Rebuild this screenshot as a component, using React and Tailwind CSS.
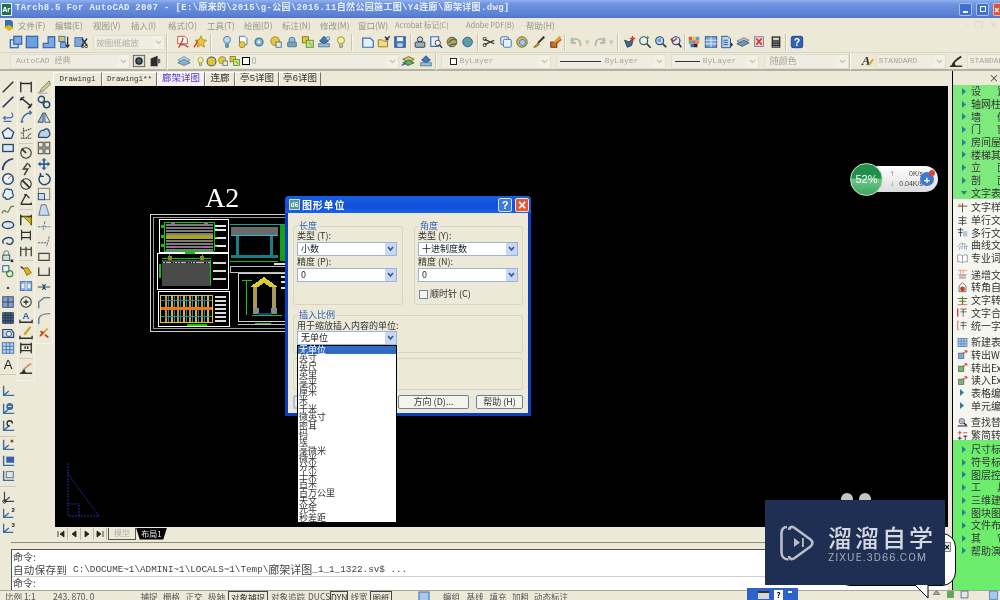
import React from "react";

const CJK = '"Noto Sans CJK SC", sans-serif';
const B = "#3a6db5", Y = "#e6c93a", K = "#2e2e2e", G = "#3d8f3d", R = "#cf3a2a", T = "#3f7f95";

const S = ({ children, s = 14 }) => (
  <svg width={s} height={s} viewBox="0 0 16 16" className="shrink-0" fill="none">{children}</svg>
);

const tb = {
  win: <><rect x="1.5" y="5.5" width="9" height="9" fill="#cfe0f5" stroke={B} strokeWidth="1.5"/><rect x="5.5" y="1.5" width="9" height="9" fill="#7fa9de" stroke={B} strokeWidth="1.5"/></>,
  full: <rect x="1.5" y="1.5" width="13" height="13" fill="#6d9fdc" stroke={B} strokeWidth="1.5"/>,
  stair: <path d="M1.5 14.5V9.5H7V2H14.5V14.5Z" fill="#7fa9de" stroke={B} strokeWidth="1.5"/>,
  arrowdoc: <><rect x="1" y="1.5" width="7" height="6" fill="#d8c36a" stroke={B}/><rect x="3" y="8.5" width="6" height="6" fill="#7fa9de" stroke={B}/><path d="M11 2V14M9 11l2 3 2-3" stroke={K} strokeWidth="1.4"/></>,
  wincut: <><rect x="1" y="3" width="9" height="10" fill="#7fa9de" stroke={B}/><path d="M9 4l6 8M15 4l-6 8" stroke={K} strokeWidth="1.5"/><circle cx="10" cy="13" r="1.5" stroke={K}/><circle cx="14" cy="13" r="1.5" stroke={K}/></>,
  pdf: <><path d="M2 1.5H10L13 4.5V10H2Z" fill="#fff" stroke={R}/><path d="M3 14.5C6 9 8 6 8 3 M4 12C8 10 11 11 14 14" stroke={R} strokeWidth="1.5"/></>,
  star: <><path d="M9 1L11 5.5L15.5 6L12 9L13 14L9 11.5L5 14L6 9L2.5 6L7 5.5Z" fill={Y} stroke="#b58a1c"/><path d="M1 14C4 11 5 9 5 6" stroke={R} strokeWidth="1.6"/></>,
  bulbb: <><circle cx="8" cy="5.5" r="4" fill="#bcd8f0" stroke={T}/><path d="M6.5 9.5V14H9.5V9.5" fill="#6d9bc0" stroke={T}/></>,
  docy: <><path d="M4 1.5H10L12.5 4V11H4Z" fill="#fff" stroke={B}/><circle cx="7" cy="11" r="3.5" fill={Y} stroke="#9a8420"/></>,
  gearb: <><circle cx="8" cy="8" r="4.5" fill="#8fb4d8" stroke={T} strokeWidth="1.5"/><circle cx="8" cy="8" r="1.6" fill="#fff"/></>,
  sunr: <><circle cx="7" cy="7" r="5" fill={Y} stroke="#9a8420"/><rect x="8" y="8" width="6" height="6" fill="#f3ebb8" stroke={B}/></>,
  prn: <><circle cx="8" cy="6" r="3.5" fill="#9fbad6" stroke={T}/><rect x="3" y="8" width="10" height="5.5" rx="1" fill="#7e9cc0" stroke={T}/></>,
  layy: <><rect x="1.5" y="2" width="7" height="7" fill={Y} stroke="#806f14"/><rect x="6" y="6" width="8" height="8" fill="#cfe27a" stroke={G}/><path d="M9 8l3 4" stroke={G}/></>,
  stamp: <><path d="M8 1.5L13 7L8 10L3 7Z" fill="#3f78bd" stroke="#234a80"/><rect x="2" y="10" width="12" height="3.5" fill="#aabccf" stroke={T}/><circle cx="12.5" cy="4" r="2" fill="#d0dff0" stroke={T}/></>,
  bulby: <><circle cx="8" cy="6" r="4" fill="#f7ee9a" stroke="#96882a"/><path d="M6.5 10V14H9.5V10" fill="#d8d3a8" stroke="#777"/></>,
  nw: <path d="M2 3.5H10.5L14 7V14H2Z" fill="#e7f1fb" stroke={B} strokeWidth="1.4"/>,
  open: <><path d="M1.5 5.5H6L7.5 7H12V13.5H1.5Z" fill="#f2dd7a" stroke="#8a7420"/><path d="M9 2L13 6M10 6L14.5 1.5" stroke={K} strokeWidth="1.6"/></>,
  save: <><rect x="2" y="2" width="12" height="12" fill="#3f78bd" stroke="#234a80"/><rect x="4.5" y="2.5" width="7" height="4.5" fill="#eaf1fa"/><rect x="5" y="9.5" width="6" height="4" fill="#bcd0e8"/></>,
  pr2: <><circle cx="8" cy="5" r="3" fill="#c4d4e6" stroke={K}/><rect x="2.5" y="8" width="11" height="6" rx="1" fill="#98afcb" stroke={K}/></>,
  prev: <><path d="M2 2H11V13H2Z" fill="#e9effa" stroke={B} strokeWidth="1.3"/><circle cx="10" cy="9" r="3" fill="#fff" stroke={K}/><path d="M12 11.5L15 14.5" stroke={K} strokeWidth="1.6"/></>,
  globey: <><circle cx="8" cy="8" r="5.5" fill="#c8a82e" stroke="#5f5210"/><path d="M4 9C7 5 11 4 13 6M5 13C7 10 10 10 13 10" stroke="#2e6cb5" strokeWidth="1.8"/></>,
  globeb: <><circle cx="7.5" cy="8" r="5.5" fill="#5f94cf" stroke="#2b5b90"/><path d="M4 6C6 4 9 5 10 7S7 10 6 12" stroke="#5faa5f" strokeWidth="2"/></>,
  cut: <><path d="M3 5L14 10M3 11L14 6" stroke={K} strokeWidth="1.4"/><circle cx="3" cy="4.5" r="1.8" stroke={K}/><circle cx="3" cy="11.5" r="1.8" stroke={K}/></>,
  copy: <><rect x="2" y="2" width="9" height="9" rx="1.5" fill="#dde9f7" stroke={B}/><rect x="5" y="5" width="9" height="9" rx="1.5" fill="#e7f1fb" stroke={B}/></>,
  paste: <><circle cx="8" cy="8" r="6" fill="#d7c05c" stroke="#6f6420"/><circle cx="8.5" cy="8.5" r="3.5" fill="#a9c9ea" stroke={B}/></>,
  brush: <><path d="M14 2L7 9" stroke={K} strokeWidth="2.2"/><path d="M7 9L2 14L5 13.5L8.5 10.5Z" fill="#d9a01e" stroke="#7b5a10"/></>,
  match: <><rect x="2" y="8" width="7" height="6" fill="#c76f33" stroke="#5a3311"/><path d="M13 2L6 9" stroke="#d9a01e" strokeWidth="3"/><path d="M14 5L8 10" stroke={R} strokeWidth="1.5"/></>,
  undo: <path d="M13 13C14 7 10 3 5 5L3 9M3 3V9H8" stroke="#b8b5a6" strokeWidth="2"/>,
  redo: <path d="M3 13C2 7 6 3 11 5L13 9M13 3V9H8" stroke="#b8b5a6" strokeWidth="2"/>,
  pan: <><path d="M3 6L8 8L13 4L11 12L6 14Z" fill="#45688f" stroke="#1f3a5a"/><path d="M9 4H15M12 1V7" stroke={R} strokeWidth="1.6"/></>,
  zr: <><circle cx="6.5" cy="6.5" r="4.5" fill="#e7f1fb" stroke="#3d5e48" strokeWidth="1.4"/><path d="M10 10L14.5 14.5" stroke={K} strokeWidth="1.8"/><path d="M11 1V5M9 3h4" stroke={G}/></>,
  zw: <><circle cx="6.5" cy="6.5" r="4.5" fill="#c7dcf2" stroke="#2d4d78" strokeWidth="1.4"/><rect x="4" y="4" width="4" height="4" fill="#6d9fdc"/><path d="M10 10L14 14" stroke={K} strokeWidth="2"/></>,
  zp: <><circle cx="8" cy="6.5" r="4.5" fill="#dde9f7" stroke="#2d4d78" strokeWidth="1.4"/><path d="M5 7l4-3M2 4l3 4" stroke="#b5341f" strokeWidth="1.5"/><path d="M11 10L14 14" stroke={K} strokeWidth="2"/></>,
  pal: <>{[[2,2,"#e8524a"],[6,2,"#f2c530"],[10,2,"#4aa3df"],[2,6,"#58b858"],[6,6,"#d455c8"],[10,6,"#f28e2b"],[4,10,"#3a6db5"],[8,10,"#2e2e2e"]].map(([x,y,c],i)=><rect key={i} x={x} y={y} width="4" height="4" fill={c}/>)}</>,
  grid: <><rect x="1.5" y="2" width="13" height="12" fill="#7fa9de" stroke="#234a80"/><path d="M8 2V14M1.5 6H14.5M1.5 10H14.5" stroke="#e7f1fb"/></>,
  docs: <><path d="M2 1.5H9L12 4.5V14.5H2Z" fill="#bcd4ee" stroke="#234a80"/><path d="M4 6H9M4 8.5H9M4 11H9" stroke="#234a80"/><path d="M12 8L15 11L12 14" fill={K}/></>,
  stack: <><path d="M1 7L9 3L15 6L7 10Z" fill="#b9c6d3" stroke="#6a7c8c"/><path d="M1 10L9 6L15 9L7 13Z" fill="#7895ae" stroke="#4c6073"/></>,
  redt: <><rect x="3" y="2" width="10" height="11" fill="#f3d5d0" stroke="#7b6fa5"/><path d="M5 4L11 11M11 4L5 11" stroke={R} strokeWidth="2"/></>,
  calc: <><rect x="3" y="1.5" width="10" height="13" fill={K}/><rect x="4.5" y="3" width="7" height="3" fill="#c7d4c0"/><path d="M5 8H11M5 10.5H11M5 13H11" stroke="#ddd" strokeDasharray="1.4 1"/></>,
  help: <><rect x="1.5" y="1.5" width="13" height="13" rx="2" fill="#2f62b5" stroke="#1e3f80"/><text x="8" y="12.5" textAnchor="middle" fontSize="12" fontWeight="700" fontFamily="Liberation Sans, sans-serif" fill="#fff">?</text></>,
  gear2: <><rect x="1.5" y="1.5" width="13" height="13" fill="#dbdbd0" stroke="#555"/><circle cx="8" cy="8" r="3.5" fill="#3f5f70" stroke="#222" strokeWidth="1.5"/></>,
  cam: <><path d="M3 5L11 2V14H3Z" fill={K}/><path d="M11 5L14 6V10L11 11Z" fill="#666"/></>,
  laystack: <><path d="M1 7L8 3L15 7L8 10Z" fill="#c4d8ea" stroke="#6a8fac"/><path d="M1 10L8 6L15 10L8 13Z" fill="#8fb0cc" stroke="#577a96"/></>,
  sm1: <><path d="M2 6L9 3L15 6L8 9Z" fill="#d7c85a" stroke="#6a6020"/><path d="M2 10L9 7L15 10L8 13Z" fill="#5fb06a" stroke="#2f6a3a"/><path d="M1 13L6 10" stroke="#2f62b5" strokeWidth="1.6"/></>,
  sm2: <><path d="M8 2L13 7L8 10L3 7Z" fill="#3f78bd" stroke="#234a80"/><rect x="2" y="10" width="12" height="3.5" fill="#aabccf" stroke={T}/></>,
  txtA: <><text x="7" y="13" textAnchor="middle" fontSize="15" fontWeight="700" fontStyle="italic" fontFamily="Liberation Serif, serif" fill={K}>A</text><path d="M10 13L15 6" stroke="#d9a01e" strokeWidth="2"/></>,
  dimst: <><path d="M1 14H15" stroke={K} strokeWidth="1.6"/><path d="M4 13C5 9 9 6 14 3" stroke={K} strokeWidth="2"/><path d="M2 14L6 9L8 14Z" fill={K}/></>,
};

const lft = {
  line: <path d="M2 14L14 2" stroke={K} strokeWidth="1.6"/>,
  xline: <path d="M2 14L14 2" stroke="#233d66" strokeWidth="2"/>,
  pline: <path d="M12 3C15 6 13 9 10 9H3M5 7L3 9L5 11M3 13H12" stroke={B} strokeWidth="1.5"/>,
  poly: <path d="M8 2L14.5 7L12 14H4L1.5 7Z" fill="#e7f1fb" stroke="#27496f" strokeWidth="1.5"/>,
  rect: <rect x="2" y="4" width="12" height="8" fill="#dbe7f5" stroke="#27496f" strokeWidth="1.5"/>,
  arc: <path d="M2 15C2 8 7 3 14 2" stroke="#27496f" strokeWidth="2"/>,
  circ: <><circle cx="8" cy="8" r="6" fill="#e7f1fb" stroke="#27496f" strokeWidth="1.7"/><path d="M8 8L12 4" stroke={R}/></>,
  cloud: <path d="M4 6C3 3 7 1 9 3C11 2 14 4 13 7C15 9 14 13 11 12C10 15 5 15 5 12C2 13 1 8 4 6Z" fill="#e7f1fb" stroke="#27496f" strokeWidth="1.4"/>,
  spline: <path d="M1 12C4 4 7 14 9 9S12 3 15 4" stroke="#5a7a5a" strokeWidth="1.4"/>,
  ell: <ellipse cx="8" cy="8" rx="6.5" ry="4" fill="#dbe7f5" stroke="#27496f" strokeWidth="1.6"/>,
  ella: <path d="M3 11C0 7 5 4 9 4S15 7 13 10S8 12 6 10" stroke="#27496f" strokeWidth="1.6"/>,
  ins: <><circle cx="6" cy="5" r="3" stroke="#3d7a55"/><rect x="2" y="7" width="8" height="6" fill="#cfe0cf" stroke="#27496f"/><rect x="11" y="12" width="3" height="3" fill={K}/></>,
  blk: <><rect x="2" y="2" width="7" height="7" fill="#e7f1fb" stroke="#27496f"/><circle cx="10" cy="11" r="3.5" stroke={G} strokeWidth="1.4"/></>,
  pt: <circle cx="8" cy="9" r="1.4" fill="#27496f"/>,
  hatch: <><rect x="2" y="2" width="12" height="12" fill="#8aa0c4" stroke="#27496f"/><path d="M2 8H14M8 2V14" stroke="#27365a"/></>,
  grad: <><rect x="2" y="2" width="12" height="12" fill="#4f6a8f" stroke="#1a2a44"/><path d="M2 8H14M8 2V14M2 5H14M2 11H14M5 2V14M11 2V14" stroke="#1a2a44" strokeWidth=".8"/></>,
  region: <><path d="M2 4H12L14.5 8V13H2Z" fill="#bcd8f0" stroke="#27496f" strokeWidth="1.3"/><circle cx="9" cy="9" r="3" fill="#e7f1fb" stroke="#27496f"/></>,
  table: <><rect x="1.5" y="2" width="13" height="12" fill="#bcd4ee" stroke="#3b6bab"/><path d="M1.5 6H14.5M1.5 10H14.5M6 2V14M10 2V14" stroke="#3b6bab"/></>,
  A: <text x="8" y="14" textAnchor="middle" fontSize="15" fontFamily="Liberation Sans, sans-serif" fill="#222">A</text>,
  dl: <><path d="M2 2V14M14 2V14M2 4H14" stroke={K} strokeWidth="1.5"/></>,
  da: <path d="M2 3L14 13M2 3l1 3M1 6l5-4M14 13l-4 2M15 10l-4 4" stroke={K} strokeWidth="1.5"/>,
  dc: <path d="M3 14C3 8 8 3 14 3M2 14l3-1M12 1l2 2-2 2" stroke="#3a6da0" strokeWidth="1.7"/>,
  dord: <path d="M2 14H14M5 2V14M5 6L14 3M8 14L14 8M2 8H5" stroke="#444" strokeWidth="1.2" strokeDasharray="2 .7"/>,
  drad: <><circle cx="8" cy="8" r="6" stroke={K} strokeWidth="1.2"/><path d="M3 3L8 8" stroke={K} strokeWidth="2"/></>,
  djog: <path d="M10 1L5 8H10L6 15M11 2L13 6" stroke="#444" strokeWidth="1.8"/>,
  ddia: <><circle cx="8" cy="8" r="6" stroke={K} strokeWidth="1.2"/><path d="M3.5 3.5L12.5 12.5" stroke={K} strokeWidth="2"/></>,
  dang: <path d="M2 14H14V12M2 14L8 3L12 7M8 3L6 3" stroke={K} strokeWidth="1.5"/>,
  dq: <><path d="M2 2V14M14 2V14M2 4H14" stroke={K} strokeWidth="1.6"/><path d="M5 4L14 13V5Z" fill="#d9b61a" stroke="#7d6a10"/></>,
  dbase: <path d="M3 2V14M13 3V14M3 5H13M3 11H13" stroke={K} strokeWidth="1.3"/>,
  dcont: <path d="M2 3V14M8 3V14M14 3V14M2 6H14" stroke={K} strokeWidth="1.3"/>,
  dlead: <><path d="M2 3L6 6" stroke={K} strokeWidth="1.5"/><path d="M5 5L10 4L14 10L9 13Z" fill="#d9b61a" stroke="#7d6a10"/></>,
  dtol: <><rect x="1.5" y="3" width="13" height="10" fill="#8ab0de" stroke="#3b6bab"/><path d="M8 3V13" stroke="#eee"/><rect x="3" y="5.5" width="3" height="5" fill="#eee"/><rect x="10" y="5.5" width="3" height="5" fill="#eee"/></>,
  dcen: <><circle cx="8" cy="8" r="6" fill="#f3f1e6" stroke={K} strokeWidth="1.2"/><path d="M8 5V11M5 8H11" stroke={K} strokeWidth="1.5"/></>,
  dA: <><text x="8" y="10" textAnchor="middle" fontSize="11" fontWeight="700" fontFamily="Liberation Sans, sans-serif" fill="#2f62b5">A</text><path d="M1 14H15M1 11V15M15 11V15" stroke={K} strokeWidth="1.5"/></>,
  dpen: <><path d="M13 1L6 10" stroke="#c9a620" strokeWidth="2.6"/><path d="M1 14H15M1 11V15M15 11V15" stroke={K} strokeWidth="1.5"/></>,
  dupd: <path d="M2 2V14M14 2V14M2 4H14M2 11H14M7 6V9M10 6V9" stroke={K} strokeWidth="1.5"/>,
  dst: <><path d="M1 14H15" stroke={K} strokeWidth="1.6"/><path d="M4 13C5 9 9 6 14 3" stroke="#c99b66" strokeWidth="2.2"/><path d="M2 14L6 9L8 14Z" fill={K}/></>,
  er: <><path d="M14 1L5 10L3 14L8 12L15 5Z" fill="#d7cf8d" stroke="#79735a"/><path d="M1 15H12" stroke="#999"/></>,
  cp: <><circle cx="5" cy="5" r="3.5" stroke="#27496f" strokeWidth="1.6"/><circle cx="11" cy="11" r="3.5" stroke="#27496f" strokeWidth="1.6"/><path d="M5 9L9 13" stroke="#27496f"/></>,
  mi: <><path d="M7 3V14H1Z" fill="#9eb8d6" stroke="#27496f"/><path d="M9 3V14H15Z" fill="#dfe7f2" stroke="#27496f"/></>,
  off: <path d="M2 13C1 8 5 4 8 5C9 2 14 3 14 7C16 10 13 14 9 13Z" fill="#b8d0e8" stroke="#27496f" strokeWidth="1.4"/>,
  arr: <>{[[1.5,1.5],[9,1.5],[1.5,9],[9,9]].map(([x,y],i)=><rect key={i} x={x} y={y} width="5.5" height="5.5" stroke="#555" strokeWidth="1.3"/>)}</>,
  mv: <path d="M8 1L11 4H9V7H12V5L15 8L12 11V9H9V12H11L8 15L5 12H7V9H4V11L1 8L4 5V7H7V4H5Z" fill="#2f5e9b"/>,
  rot: <path d="M10 2A6.3 6.3 0 1 1 5 3M4 1V5H8" stroke="#27496f" strokeWidth="1.7"/>,
  sc: <><rect x="1.5" y="1.5" width="13" height="13" stroke="#777"/><rect x="1.5" y="7.5" width="7" height="7" fill="#c8d9ec" stroke="#27496f"/></>,
  st: <><path d="M5 2H10L14 14H2Z" fill="#c8d9ec" stroke="#4a6a8a"/><path d="M10 2L14 14" stroke="#999"/></>,
  tr: <path d="M1 10H15M9 4L7 14" stroke="#5f7f9f" strokeWidth="1.2" strokeDasharray="3 1"/>,
  ex: <path d="M1 10H8M8 10H11M14 3L11 14" stroke="#4a6a8a" strokeWidth="1.2" strokeDasharray="2.5 1"/>,
  brk: <path d="M2 5H14V13H2Z" fill="#ece9d8" stroke="#444" strokeWidth="1.3"/>,
  join: <path d="M2 4V13H14V4" stroke="#444" strokeWidth="1.5"/>,
  bar: <path d="M1 8H15M6 5L9 8L6 11M10 5L7 8L10 11" stroke="#27496f" strokeWidth="1.4"/>,
  cham: <path d="M2 15V8L8 3H15" stroke="#5f7f9f" strokeWidth="1.6"/>,
  fil: <path d="M2 15V10C2 6 6 3 15 3" stroke="#5f7f9f" strokeWidth="1.6"/>,
  expl: <><path d="M3 12L12 3" stroke="#d9a01e" strokeWidth="2"/><path d="M4 6L7 8L4 11M9 10L13 13" stroke={R} strokeWidth="2"/></>,
  u1: <path d="M3 2V13H15M3 13L9 8" stroke="#3a6da0" strokeWidth="1.6"/>,
  u2: <><path d="M3 2V13H15M3 13L9 8" stroke="#3a6da0" strokeWidth="1.6"/><circle cx="10" cy="5" r="4" fill="#3a6da0"/><path d="M8 5H12" stroke="#fff"/></>,
  u3: <><path d="M3 2V13H15M3 13L9 8" stroke="#3a6da0" strokeWidth="1.6"/><path d="M13 5A3 3 0 1 0 10 8" stroke={K} strokeWidth="1.5"/></>,
  u4: <><path d="M3 2V13H15M3 13L9 8" stroke="#3a6da0" strokeWidth="1.6"/><rect x="11" y="2" width="3" height="3" fill="#6b5a12"/></>,
  u5: <><path d="M3 2V13H15" stroke="#3a6da0" strokeWidth="1.6"/><rect x="6" y="3" width="9" height="7" fill="#2f62b5"/></>,
  u6: <><path d="M3 2V13H15" stroke="#3a6da0" strokeWidth="1.6"/><rect x="6" y="3" width="8" height="7" fill="#e9e6d6" stroke="#3a6da0"/></>,
  u7: <><path d="M4 2V13H15M4 13L10 8" stroke="#445" strokeWidth="1.4"/><circle cx="4" cy="13" r="2" stroke="#222"/></>,
  u8: <><path d="M3 3V13H14M3 13L9 8" stroke="#3a6da0" strokeWidth="1.5"/><text x="12" y="7" fontSize="7" fontWeight="700" fill="#222" fontFamily="Liberation Sans, sans-serif">2</text></>,
  u9: <><path d="M3 3V13H14M3 13L9 8" stroke="#3a6da0" strokeWidth="1.5"/><text x="12" y="7" fontSize="7" fontWeight="700" fill="#222" fontFamily="Liberation Sans, sans-serif">3</text></>,
};

const rgt = {
  a: <><path d="M1 6H15M8 2V15" stroke="#7b4a2a" strokeWidth="1.4"/><path d="M2 3L6 5" stroke={R}/></>,
  z: <path d="M8 1V3M2 4H14M3 8H13M2 12H14M8 4V15" stroke="#333" strokeWidth="1.2"/>,
  m: <><path d="M1 4H9M2 8H8M5 1V14" stroke="#333" strokeWidth="1.2"/><rect x="9" y="6" width="6" height="8" fill="#a9c6e6"/></>,
  c: <path d="M1 10C5 3 11 3 15 10M3 14L5 9M7 13L8 6M11 13L11 7M14 14L13 9" stroke="#3a5ea0" strokeDasharray="2 .8"/>,
  b: <><path d="M1 3C4 2 6 3 8 4C10 3 12 2 15 3V13C12 12 10 13 8 14C6 13 4 12 1 13Z" fill="#fff" stroke="#777"/><path d="M8 4V14" stroke="#777"/></>,
  d: <><path d="M2 2H14M5 2V8M9 2V8M2 8H14" stroke={R} strokeDasharray="1 .6"/><path d="M3 10H13M3 13H13" stroke="#555"/></>,
  rot: <><path d="M8 1L13 6V14H3V6Z" fill="#fff" stroke="#333"/><circle cx="8" cy="10" r="3.5" fill={R}/></>,
  t: <><path d="M1 5H15M8 2V14M3 9H13" stroke="#5a7a2a" strokeWidth="1.6"/><path d="M1 14H15" stroke={R}/></>,
  h: <><path d="M1 2V14" stroke="#d04060" strokeWidth="2"/><path d="M5 3H14M5 7H14M9 3V14" stroke="#333"/></>,
  u: <><path d="M1 2V14M3 2H1M3 14H1" stroke={R}/><path d="M5 4H14M5 8H14M9 2V14" stroke="#333"/></>,
  tb: <><rect x="1.5" y="2" width="13" height="12" fill="#bcd4ee" stroke="#3b6bab"/><path d="M1.5 6H14.5M1.5 10H14.5M6 2V14M10 2V14" stroke="#3b6bab"/></>,
  w: <><rect x="2" y="6" width="8" height="8" fill="#8aa6d0" stroke="#3b6bab"/><path d="M7 7L14 3M11 2L15 3L13 6" stroke={R} strokeWidth="1.3"/></>,
  e: <><rect x="2" y="6" width="8" height="8" fill="#7fb27a" stroke="#3f7a3b"/><path d="M7 7L14 3M11 2L15 3L13 6" stroke={R} strokeWidth="1.3"/></>,
  fi: <><circle cx="7" cy="6" r="4" fill="#b8c0c8" stroke="#556"/><path d="M1 13H15" stroke="#555" strokeWidth="2"/><path d="M10 9L14 12" stroke="#222" strokeWidth="2"/></>,
  j: <><path d="M1 4H7M4 1V7M9 4H15" stroke={R} strokeWidth="1.2"/><path d="M1 12H7M9 9H15M12 8V15M4 9V15" stroke="#224" strokeWidth="1.2"/></>,
};

const C = ({ name, set = tb, w = "w-[16.25px]" }) => (
  <div className={`${w} h-full flex items-center justify-center shrink-0`}><S>{set[name]}</S></div>
);
const Sep = () => <div className="w-[1px] h-[17px] self-center bg-[#c9c5b2] border-r border-[#f8f7ef] box-content shrink-0" />;
const Chev = () => (
  <div className="w-[11px] h-full ml-auto flex items-center justify-center bg-[#f3f1e6] shrink-0">
    <svg width="7" height="5" viewBox="0 0 7 5" fill="none"><path d="M1 1L3.5 3.5L6 1" stroke="#c0c0b5" strokeWidth="1.2"/></svg>
  </div>
);
const Combo = ({ className, children }) => (
  <div className={`h-[15px] flex items-center self-center bg-[#efede1] border border-[#e1dece] shrink-0 overflow-hidden text-[#a8a598] ${className}`}>
    {children}<Chev />
  </div>
);
const mono = { fontFamily: `"Liberation Mono", ${CJK}` };

const menus = [
  ["文件(F)", "w-[37px]"], ["编辑(E)", "w-[38px]"], ["视图(V)", "w-[38px]"], ["插入(I)", "w-[37px]"], ["格式(O)", "w-[39px]"], ["工具(T)", "w-[37px]"],
  ["绘图(D)", "w-[38px]"], ["标注(N)", "w-[38px]"], ["修改(M)", "w-[38px]"], ["窗口(W)", "w-[37px]"], ["Acrobat 标记(C)", "w-[71px]"], ["Adobe PDF(B)", "w-[60px]"], ["帮助(H)", "w-[40px]"],
];

const TitleBar = () => (
  <div className="h-[18px] flex items-center bg-[linear-gradient(#8fb0ee_0%,#6c92e0_25%,#5c82d6_80%,#4f74c8_100%)] shrink-0">
    <div className="ml-[1px] w-[11px] h-[13px] bg-[#2d6b52] border border-[#cfe] flex items-center justify-center text-[7px] leading-none text-white font-bold">Ar</div>
    <div className="ml-[3px] text-[9px] font-bold text-[#e8eefc] whitespace-nowrap tracking-[0.33px]" style={mono}>TArch8.5 For AutoCAD 2007 - [E:\原来的\2015\g-公园\2015.11自然公园施工图\Y4连廊\廊架详图.dwg]</div>
    <div className="ml-auto flex items-center gap-[4px]">
      <div className="w-[13px] h-[13px] rounded-[2px] bg-[#3f6fd0] border border-[#a8c0ee] flex items-end justify-center pb-[2px]"><div className="w-[5px] h-[2px] bg-white" /></div>
      <div className="w-[13px] h-[13px] rounded-[2px] bg-[#3f6fd0] border border-[#a8c0ee] flex items-center justify-center"><div className="w-[6px] h-[6px] border border-white" /></div>
      <div className="w-[7px] h-[13px] rounded-l-[2px] bg-[#d8553a] border-l border-y border-[#eeb0a0] text-white text-[10px] leading-[12px] font-bold overflow-hidden">×</div>
    </div>
  </div>
);

const MenuBar = () => (
  <div className="h-[14px] flex items-center shrink-0 text-[8.5px] text-[#96948a] relative" style={{ fontFamily: CJK }}>
    <div className="w-[18px] h-full flex items-center justify-center">
      <svg width="12" height="13" viewBox="0 0 12 13"><path d="M2 1H8L10 3V9H2Z" fill="#3a6db5"/><path d="M1 8L6 12L11 9L6 6Z" fill="#d9b61a"/></svg>
    </div>
    {menus.map(([m, w]) => <div key={m} className={`${w} whitespace-nowrap shrink-0 ${m[0] === "A" ? "text-[7.5px]" : ""}`}>{m}</div>)}
    <div className="ml-auto flex items-center gap-[6px] pr-[2px] text-[#d4d1c2] text-[9px]"><span>-</span><span>❐</span><span>×</span></div>
  </div>
);

const Row1 = () => (
  <div className="h-[21px] flex shrink-0 border-b border-[#d9d6c5]">
    <div className="w-[8px] shrink-0" />
    {["win", "full", "stair", "arrowdoc", "wincut"].map(n => <C key={n} name={n} />)}
    <div className="w-[4px] shrink-0" />
    <Combo className="w-[72px] text-[8.5px] pl-[2px]"><span className="text-[#b0ad9f] whitespace-nowrap" style={{ fontFamily: CJK }}>按图纸缩放</span></Combo>
    <div className="w-[1px] shrink-0" /><Sep /><div className="w-[7px] shrink-0" />
    {["pdf", "star"].map(n => <C key={n} name={n} />)}
    <div className="w-[2px] shrink-0" /><Sep /><div className="w-[7px] shrink-0" />
    {["bulbb", "docy", "gearb", "sunr", "prn", "layy", "stamp", "bulby"].map(n => <C key={n} name={n} />)}
    <div className="w-[2px] shrink-0" /><Sep /><div className="w-[7px] shrink-0" />
    {["nw", "open", "save"].map(n => <C key={n} name={n} />)}
    <div className="w-[1px] shrink-0" /><Sep />
    {["pr2", "prev", "globey", "globeb"].map(n => <C key={n} name={n} />)}
    <Sep /><div className="w-[2px] shrink-0" />
    {["cut", "copy", "paste", "brush", "match"].map(n => <C key={n} name={n} w="w-[16.75px]" />)}
    <Sep /><div className="w-[3px] shrink-0" />
    <C name="undo" w="w-[13px]" /><div className="w-[11px] text-center text-[9px] leading-[20px] text-[#c5c2b3]">▾</div>
    <C name="redo" w="w-[13px]" /><div className="w-[11px] text-center text-[9px] leading-[20px] text-[#c5c2b3]">▾</div>
    <Sep /><div className="w-[2px] shrink-0" />
    {["pan", "zr", "zw", "zp"].map(n => <C key={n} name={n} w="w-[15.75px]" />)}
    <Sep />
    {["pal", "grid", "docs", "stack", "redt", "calc"].map(n => <C key={n} name={n} />)}
    <div className="w-[1px] shrink-0" /><Sep /><div className="w-[2px] shrink-0" />
    <C name="help" />
  </div>
);

const Row2 = () => (
  <div className="h-[18px] flex shrink-0 border-b-2 border-[#b5b1a0] text-[8px]">
    <div className="w-[10px] shrink-0" />
    <Combo className="w-[120px] pl-[5px]"><span className="whitespace-nowrap" style={mono}>AutoCAD 经典</span></Combo>
    <div className="w-[1px] shrink-0" />
    <C name="gear2" /><C name="cam" />
    <div className="w-[2px] shrink-0" /><Sep /><div className="w-[8px] shrink-0" />
    <C name="laystack" />
    <Combo className="w-[206px] ml-[1px]">
      <div className="flex items-center gap-0 pl-[1px]">
        <S s={11}>{tb.bulby}</S><S s={11}><circle cx="8" cy="8" r="6.5" fill="#dcc63a" stroke="#555" strokeWidth="1.5"/></S><S s={12}>{tb.sunr}</S><S s={12}>{tb.layy}</S>
        <div className="w-[8px] h-[8px] bg-white border border-black mx-[1px]" /><span className="ml-[1px]">0</span>
      </div>
    </Combo>
    <C name="sm1" w="w-[18px]" /><C name="sm2" w="w-[18px]" />
    <Sep /><div className="w-[4px] shrink-0" />
    <Combo className="w-[110px] pl-[8px]" ><div className="w-[7px] h-[7px] bg-white border border-[#222] mr-[3px]" /><span className="whitespace-nowrap" style={mono}>ByLayer</span></Combo>
    <div className="w-[5px] shrink-0" />
    <Combo className="w-[110px] pl-[3px]"><div className="w-[41px] h-[1px] bg-[#333] mr-[4px]" /><span className="whitespace-nowrap" style={mono}>ByLayer</span></Combo>
    <div className="w-[5px] shrink-0" />
    <Combo className="w-[88px] pl-[3px]"><div className="w-[25px] h-[1px] bg-[#333] mr-[3px]" /><span className="whitespace-nowrap" style={mono}>ByLayer</span></Combo>
    <div className="w-[5px] shrink-0" />
    <Combo className="w-[85px] pl-[5px]"><span className="text-[9px] whitespace-nowrap" style={{ fontFamily: CJK }}>随颜色</span></Combo>
    <Sep /><div className="w-[7px] shrink-0" />
    <C name="txtA" w="w-[18px]" />
    <Combo className="w-[70px] pl-[2px]"><span className="whitespace-nowrap" style={mono}>STANDARD</span></Combo>
    <C name="dimst" w="w-[21px]" />
    <Combo className="w-[36px] pl-[2px]"><span className="whitespace-nowrap" style={mono}>STANDARD</span></Combo>
  </div>
);

const IconColumn = ({ items, className }) => (
  <div className={`flex flex-col shrink-0 ${className}`}>
    {items.map((n, i) => n === "-"
      ? <div key={i} className="h-[1px] my-[2px] mx-[1px] bg-[#cfcbb9]" />
      : <div key={i} className="h-[15.4px] flex items-center justify-center"><S s={14}>{lft[n]}</S></div>)}
  </div>
);

const LeftBars = () => (
  <div className="w-[55px] shrink-0 flex pt-[8px]">
    <div className="w-[16px] shrink-0">
      <IconColumn className="w-[15px]" items={["line","xline","pline","poly","rect","arc","circ","cloud","spline","ell","ella","ins","blk","pt","hatch","grad","region","table","A"]} />
      <div className="h-[4px] border-b border-[#cfcbb9]" />
      <div className="h-[8px]" />
      <IconColumn className="w-[15px] gap-[2px]" items={["u1","u2","u3"]} />
      <div className="h-[2px]" /><div className="h-[1px] bg-[#cfcbb9]" /><div className="h-[1px]" />
      <IconColumn className="w-[15px]" items={["u4","u5","u6"]} />
      <div className="h-[2px]" /><div className="h-[1px] bg-[#cfcbb9]" /><div className="h-[3px]" />
      <IconColumn className="w-[15px]" items={["u7","u8","u9"]} />
    </div>
    <div className="w-[18px] ml-[1px] h-[302px] border-x border-b border-[#f6f4ea] shrink-0">
      <IconColumn items={["dl","da","dc","dord","-","drad","djog","ddia","dang","-","dq","dbase","dcont","-","dlead","dtol","dcen","dA","dpen","dupd","-","dst"]} />
    </div>
    <div className="w-[18px] h-[265px] border-r border-b border-[#f6f4ea] shrink-0">
      <IconColumn items={["er","cp","mi","off","arr","mv","rot","sc","st","tr","ex","brk","join","bar","cham","fil","expl"]} />
    </div>
  </div>
);

const tabs = [["Drawing1", "w-[49px]"], ["Drawing1**", "w-[55px]"], ["廊架详图", "w-[48px]"], ["连廊", "w-[30px]"], ["亭5详图", "w-[44px]"], ["亭6详图", "w-[42px]"]];

const Tabs = () => (
  <div className="h-[15px] flex -ml-[2px] shrink-0 pt-[1px]">
    {tabs.map(([t, w], i) => (
      <div key={t} className={`${w} shrink-0 flex items-center justify-center whitespace-nowrap border border-b-0 border-t-white border-l-white border-r-[#77746a] ${i === 2 ? "bg-[#f8eef8] text-[#4a3ad0] text-[9.5px]" : i < 2 ? "text-[#333] text-[7.5px]" : "text-[#333] text-[9.5px]"}`} style={mono}>{t}</div>
    ))}
  </div>
);

const speck = Array.from({ length: 170 }, (_, i) => [22 + ((i * 37) % 48), 82 + ((i * 23) % 23)]);

const CadDrawing = () => (
  <svg width="150" height="160" viewBox="0 0 150 160" className="absolute left-[85px] top-[94px]" fill="none" shapeRendering="crispEdges">
    <rect x="10.5" y="34.5" width="140" height="117" stroke="#cfcfcf"/>
    <rect x="13.5" y="37.5" width="136" height="111" stroke="#9a9a9a"/>
    <rect x="19.5" y="39.5" width="69" height="33" stroke="#fff"/>
    {[44,47,50,53,60,63,66,69].map(y => <rect key={y} x="26" y={y} width="47" height="2" fill="#7b7b7b"/>)}
    <rect x="26" y="55" width="47" height="4" fill="#a9a520"/>
    <path d="M24 42H74M24 71H74M24 42V71M74 42V71" stroke="#11c411"/>
    <rect x="31" y="43" width="4" height="2" fill="#d04cd0"/><rect x="64" y="43" width="4" height="2" fill="#d04cd0"/><rect x="31" y="66" width="4" height="2" fill="#d04cd0"/><rect x="64" y="66" width="4" height="2" fill="#d04cd0"/>
    {[45,49,57,65].map(y => <rect key={y} x="75" y={y} width="11" height="2" fill="#e8e8e8"/>)}
    {[48,57,66].map(y => <rect key={y} x="74" y={y} width="3" height="1" fill="#11c411"/>)}
    <rect x="21" y="45" width="3" height="3" fill="#11c411"/><rect x="21" y="55" width="3" height="3" fill="#11c411"/><rect x="21" y="64" width="3" height="3" fill="#11c411"/>

    <rect x="17.5" y="73.5" width="71" height="36" stroke="#fff"/>
    <rect x="22" y="80" width="49" height="26" fill="#4a4a4a"/>
    {speck.map(([x, y], i) => <rect key={i} x={x} y={y} width="2" height="1" fill={i % 3 ? "#bdbdbd" : "#000"}/>)}
    <path d="M22 78H71M29 74V80M62 74V80M70 80V105" stroke="#11c411"/>
    <rect x="28" y="76" width="4" height="4" fill="#8a8a1a"/><rect x="60" y="76" width="4" height="4" fill="#8a8a1a"/>
    {[82,90,98].map(y => <rect key={y} x="73" y={y} width="13" height="2" fill="#d8d8d8"/>)}
    <rect x="19" y="84" width="2" height="14" fill="#11c411"/>
    <rect x="45" y="72" width="10" height="2" fill="#11c411"/>

    <rect x="18.5" y="111.5" width="71" height="35" stroke="#fff"/>
    <rect x="20.5" y="115.5" width="52" height="27" stroke="#d8c83a"/>
    {[25,31,37,43,49,55,61,67].map(x => <rect key={x} x={x} y="116" width="2" height="26" fill={x % 4 === 1 ? "#c39a3a" : "#e0b238"}/>)}
    {[28,34,40,46,52,58,64].map(x => <rect key={x} x={x} y="116" width="1" height="26" fill="#2a87a8"/>)}
    <rect x="21" y="127" width="51" height="3" fill="#e87a1e"/>
    <rect x="21" y="120" width="51" height="1" fill="#2a87a8"/><rect x="21" y="136" width="51" height="1" fill="#2a87a8"/>
    {[116,120,124,128,132,136,140].map(y => <rect key={y} x="75" y={y} width="11" height="2" fill="#dcdcdc"/>)}
    <rect x="47" y="144" width="20" height="2" fill="#11c411"/>

    <rect x="91" y="47" width="47" height="8" fill="#6a6a6a"/>
    <path d="M90 44H145" stroke="#1b9d8f"/>
    <rect x="91" y="55" width="47" height="1" fill="#2fbfc9"/>
    <rect x="96" y="56" width="3" height="20" fill="#1d7d87"/><rect x="130" y="56" width="3" height="20" fill="#1d7d87"/>
    <rect x="91" y="75" width="47" height="3" fill="#1d7d87"/>
    <path d="M90 81H138" stroke="#11c411"/>
    <rect x="140" y="45" width="5" height="36" fill="#13a013"/>
    <rect x="90.5" y="86.5" width="60" height="6" stroke="#bdbdbd"/>
    <rect x="134" y="83" width="12" height="2" fill="#e0e0e0"/>

    <rect x="98.5" y="93.5" width="52" height="48" stroke="#cfcfcf"/>
    <path d="M110 107L124 97L138 107H130L124 103L118 107Z" fill="#d8cb3a"/>
    <rect x="113" y="107" width="4" height="21" fill="#a89a55"/><rect x="132" y="107" width="4" height="21" fill="#a89a55"/>
    <rect x="113" y="128" width="6" height="6" fill="#8a8a8a"/><rect x="131" y="128" width="6" height="6" fill="#8a8a8a"/>
    <rect x="118" y="133" width="14" height="2" fill="#2b2ba8"/>
    <path d="M102 100H112M106 100V135M112 135H142" stroke="#11c411"/>
    <rect x="141" y="96" width="5" height="2" fill="#e0e0e0"/><rect x="141" y="101" width="5" height="2" fill="#e0e0e0"/><rect x="141" y="107" width="5" height="2" fill="#e0e0e0"/>
    <rect x="115" y="143" width="16" height="2" fill="#11c411"/>
    <path d="M98 144H150" stroke="#bdbdbd"/>
  </svg>
);

const NetWidget = () => (
  <div className="absolute left-[795px] top-[77px] w-[90px] h-[34px] flex items-center">
    <div className="absolute left-[16px] top-[3px] w-[72px] h-[26px] rounded-full bg-[linear-gradient(#ffffff,#dcdcdc)] flex items-center pl-[24px] text-[7px] leading-[10px] text-[#444]" style={{ fontFamily: '"Liberation Sans", sans-serif' }}>
      <div className="w-[8px] text-[#d04040] text-[8px] leading-[10px]">↑<br /><span className="text-[#3f9a5a]">↓</span></div>
      <div className="w-[25px] text-right">0K/s<br />0.04K/s</div>
    </div>
    <div className="absolute left-[0px] top-[0px] w-[33px] h-[33px] rounded-full border border-[#c9e9d0] bg-[linear-gradient(#1f8f4a_0%,#1f8f4a_46%,#6fc88a_48%,#3da660_100%)] flex items-center justify-center text-white text-[11px]" style={{ fontFamily: '"Liberation Sans", sans-serif' }}>52%</div>
    <div className="absolute left-[70px] top-[9px] w-[14px] h-[14px] rounded-full bg-[#3f78d0] flex items-center justify-center text-white text-[11px] leading-none font-bold">+</div>
    <div className="absolute left-[79px] top-[7px] w-[6px] h-[6px] rounded-full bg-[#e0413c]" />
  </div>
);

const Canvas = () => (
  <div className="relative h-[441px] w-[893px] bg-black overflow-hidden shrink-0">
    <div className="absolute left-[150px] top-[95px] text-[28px] leading-[34px] text-white" style={{ fontFamily: '"Liberation Serif", serif' }}>A2</div>
    <CadDrawing />
    <NetWidget />
    <svg width="36" height="56" viewBox="0 0 36 56" className="absolute left-[11px] top-[376px]" fill="none">
      <path d="M2 1V54H33L2 12" stroke="#1c2f9e" strokeWidth="1" strokeDasharray="2 1"/>
      <path d="M2 42H13V54" stroke="#1c2f9e" strokeDasharray="2 1"/>
    </svg>
  </div>
);

const navIcons = ["M1 1V7M7 1L3 4L7 7Z", "M6 1L2 4L6 7Z", "M2 1L6 4L2 7Z", "M7 1V7M1 1L5 4L1 7Z"];

const LayoutTabs = () => (
  <div className="h-[13px] flex items-center shrink-0 text-[8px]" style={{ fontFamily: CJK }}>
    {navIcons.map((d, i) => (
      <div key={i} className="w-[13px] h-[12px] border-r border-[#bdb9a7] flex items-center justify-center">
        <svg width="8" height="8" viewBox="0 0 8 8"><path d={d} fill="#222" stroke="#222" strokeWidth=".8"/></svg>
      </div>
    ))}
    <div className="w-[1px]" />
    <div className="w-[28px] h-[12px] border-x border-b border-[#555] rounded-b-[1px] flex items-center justify-center text-[#b5b2a5]">模型</div>
    <div className="w-[31px] h-[12px] bg-black text-[#eee] [clip-path:polygon(0_0,100%_0,88%_100%,12%_100%)] flex items-center justify-center">布局1</div>
  </div>
);

const Command = () => (
  <div className="flex-1 flex flex-col pl-[11px]">
    <div className="h-[1px] bg-[#8f8c7d]" />
    <div className="h-[6px]" />
    <div className="flex-1 w-[937px] bg-white border-t border-l border-t-[#55534a] border-l-[#55534a] relative flex flex-col text-[#444] overflow-hidden">
      <div className="h-[12px] pl-[1px] pt-[1px] text-[10px] leading-[11px] whitespace-nowrap" style={{ fontFamily: CJK }}>命令:</div>
      <div className="h-[12px] pl-[1px] mt-[1px] leading-[13px] flex items-center whitespace-nowrap">
        <span className="text-[10.5px] tracking-[0.03em] mr-[6px]" style={{ fontFamily: CJK }}>自动保存到</span>
        <span className="text-[9.3px]" style={{ fontFamily: '"Liberation Mono", monospace' }}>C:\DOCUME~1\ADMINI~1\LOCALS~1\Temp\</span>
        <span className="text-[11px]" style={{ fontFamily: CJK }}>廊架详图</span>
        <span className="text-[9.3px]" style={{ fontFamily: '"Liberation Mono", monospace' }}>_1_1_1322.sv$ ...</span>
      </div>
      <div className="h-[1px] mt-[1px] bg-[#cfcfcf]" />
      <div className="pl-[1px] text-[10px] leading-[12px] whitespace-nowrap" style={{ fontFamily: CJK }}>命令:</div>
    </div>
  </div>
);

const RowG = ({ t, tb: two, open }) => (
  <div className="h-[12.7px] flex items-center shrink-0">
    <div className="w-[18px] pl-[8px] shrink-0">
      <svg width="6" height="7" viewBox="0 0 6 7">{open ? <path d="M0 2H6L3 6Z" fill="#2b7f92"/> : <path d="M1 0L5 3.5L1 7Z" fill="#2b7f92"/>}</svg>
    </div>
    {two ? <><span className="w-[26px] shrink-0">{t}</span><span className="shrink-0">{two}</span></> : <span className="whitespace-nowrap">{t}</span>}
  </div>
);
const RowI = ({ i, t }) => (
  <div className="h-[12.7px] flex items-center shrink-0">
    <div className="w-[18px] flex justify-center shrink-0">{i ? <S s={11}>{rgt[i]}</S> : <svg width="6" height="7" viewBox="0 0 6 7"><path d="M1 0L5 3.5L1 7Z" fill="#2b7f92"/></svg>}</div>
    <span className="whitespace-nowrap">{t}</span>
  </div>
);

const RightPanel = () => (
  <div className="w-[48px] shrink-0 border-l border-black overflow-hidden bg-[#f6f6f0] flex flex-col text-[10px] leading-none text-[#333]" style={{ fontFamily: CJK }}>
    <div className="h-[14px] bg-[#ece9d8] text-right pr-[1px] text-[10px] leading-[14px] shrink-0">×</div>
    <div className="bg-[#7eea7e] flex flex-col h-[114px] shrink-0">
      <RowG t="设" tb="置" /><RowG t="轴网柱子" /><RowG t="墙" tb="体" /><RowG t="门" tb="窗" /><RowG t="房间屋顶" /><RowG t="楼梯其他" /><RowG t="立" tb="面" /><RowG t="剖" tb="面" /><RowG t="文字表格" open />
    </div>
    <div className="flex flex-col pt-[2px] h-[241px] shrink-0">
      <RowI i="a" t="文字样式" /><RowI i="z" t="单行文字" /><RowI i="m" t="多行文字" /><RowI i="c" t="曲线文字" /><RowI i="b" t="专业词库" />
      <div className="h-[1px] my-[2px] mx-[1px] bg-[#c9c9c0]" />
      <RowI i="d" t="递增文字" /><RowI i="rot" t="转角自纠" /><RowI i="t" t="文字转化" /><RowI i="h" t="文字合并" /><RowI i="u" t="统一字高" />
      <div className="h-[1px] my-[2px] mx-[1px] bg-[#c9c9c0]" />
      <RowI i="tb" t="新建表格" /><RowI i="w" t="转出Word" /><RowI i="e" t="转出Excel" /><RowI i="e" t="读入Excel" /><RowI t="表格编辑" /><RowI t="单元编辑" />
      <div className="h-[1px] my-[2px] mx-[1px] bg-[#c9c9c0]" />
      <RowI i="fi" t="查找替换" /><RowI i="j" t="繁简转换" />
    </div>
    <div className="bg-[#6cee6c] flex-1 flex flex-col pt-[3px]">
      <RowG t="尺寸标注" /><RowG t="符号标注" /><RowG t="图层控制" /><RowG t="工" tb="具" /><RowG t="三维建模" /><RowG t="图块图案" /><RowG t="文件布图" /><RowG t="其" tb="它" /><RowG t="帮助演示" />
    </div>
  </div>
);

const stat = [
  ["捕捉", "w-[22px]"], ["栅格", "w-[23px]"], ["正交", "w-[22px]"], ["极轴", "w-[23px]"], ["对象捕捉", "w-[40px]", 1], ["对象追踪", "w-[40px]"], ["DUCS", "w-[22px]"], ["DYN", "w-[18px]", 1], ["线宽", "w-[22px]"], ["图纸", "w-[22px]", 1],
];
const stat2 = [["编组", "w-[23px]"], ["基线", "w-[24px]"], ["填充", "w-[22px]"], ["加粗", "w-[23px]"], ["动态标注", "w-[38px]"]];

const StatusBar = () => (
  <div className="h-[10px] flex shrink-0 text-[8.5px] leading-[10px] text-[#555] bg-[#ece9d8] border-t border-[#a9a594] whitespace-nowrap overflow-visible relative" style={{ fontFamily: CJK }}>
    <div className="w-[53px] pl-[5px] shrink-0">比例 1:1</div>
    <div className="w-[85px] shrink-0">243, 870, 0</div>
    {stat.map(([t, w, p]) => <div key={t} className={`${w} shrink-0 text-center ${p ? "border-t border-x border-[#444] text-[#333]" : ""}`}>{t}</div>)}
    <div className="w-[18px] shrink-0" />
    <div className="w-[30px] shrink-0 flex items-start justify-center"><svg width="14" height="10" viewBox="0 0 14 10"><rect x="1" y="1" width="10" height="9" fill="#a8c8ec" stroke="#3a6db5"/></svg></div>
    {stat2.map(([t, w]) => <div key={t} className={`${w} shrink-0 text-center`}>{t}</div>)}
    <div className="w-[177px] shrink-0" />
    <div className="w-[51px] h-[12px] -mt-[3px] shrink-0 bg-[#2f62c8] flex items-center justify-end gap-[5px] pr-[6px] text-[8px]">
      <div className="w-[11px] h-[8px] bg-[#d8d8d0] border-t-2 border-[#333] mt-[2px]" />
      <div className="w-[9px] h-[10px] bg-white text-black text-center text-[8px] leading-[10px] font-bold mt-[1px]">?</div>
      <div className="w-[4px] h-[2px] bg-white mb-[4px]" />
    </div>
    <div className="flex-1 flex items-start justify-end gap-[3px] pr-[1px] -mt-[2px]">
      <S s={11}><path d="M8 2L13 8H3Z" fill="#a0a0a0" stroke="#666"/></S>
      <S s={11}><rect x="3" y="3" width="10" height="10" fill="#5fa65f"/></S>
      <S s={11}><path d="M3 3H13V13H3Z" fill="#dfe8f0" stroke="#3a4a60"/></S>
      <div className="w-[12px]" />
      <S s={11}><rect x="2" y="3" width="12" height="12" fill="#a8c8ec" stroke="#3a6db5"/></S>
    </div>
  </div>
);

const Field = ({ text, className }) => (
  <div className={`h-[14px] bg-white border border-[#9fb3cf] flex items-center pl-[3px] text-[9px] text-[#222] ${className}`}>
    <span className="flex-1 whitespace-nowrap">{text}</span>
    <div className="w-[11px] h-[12px] bg-[#c8d8f4] flex items-center justify-center shrink-0">
      <svg width="7" height="6" viewBox="0 0 7 6" fill="none"><path d="M1 1L3.5 4L6 1" stroke="#35578f" strokeWidth="1.6"/></svg>
    </div>
  </div>
);
const Group = ({ label, className, children }) => (
  <div className={`relative border border-[#d8d4c0] rounded-[3px] ${className}`}>
    {label && <div className="absolute -top-[7px] left-[4px] px-[1px] bg-[#ece9d8] text-[9px] leading-[11px] text-[#2f5fb5]">{label}</div>}
    {children}
  </div>
);
const units = ["无单位","英寸","英尺","英里","毫米","厘米","米","千米","微英寸","密耳","码","埃","毫微米","微米","分米","十米","百米","百万公里","天文","光年","秒差距"];

const Dialog = () => (
  <div className="absolute left-[285px] top-[196px] w-[246px] h-[220px] bg-[#ece9d8] border-x-[3px] border-b-[3px] border-[#0a3fc0] rounded-t-[4px] flex flex-col text-[#333]" style={{ fontFamily: CJK }}>
    <div className="h-[17px] -mx-[3px] bg-[linear-gradient(#1a5fe0,#0f50d8_60%,#1a62e8)] rounded-t-[4px] flex items-center pl-[4px] shrink-0">
      <div className="w-[11px] h-[11px] bg-[#4f9a8a] border border-[#cde] text-[6px] leading-[9px] text-white text-center font-bold">d6</div>
      <span className="ml-[2px] text-[10px] tracking-[0.08em] text-white font-bold">图形单位</span>
      <div className="ml-auto mr-[2px] flex gap-[3px]">
        <div className="w-[14px] h-[14px] rounded-[2px] bg-[#3f78e0] border border-[#cfe0ff] text-white text-[11px] leading-[13px] text-center font-bold" style={{ fontFamily: '"Liberation Sans", sans-serif' }}>?</div>
        <div className="w-[14px] h-[14px] rounded-[2px] bg-[#df5a35] border border-[#ffd9c9] text-white text-[14px] leading-[12px] text-center font-bold" style={{ fontFamily: '"Liberation Sans", sans-serif' }}>×</div>
      </div>
    </div>
    <div className="flex gap-[11px] pl-[5px] pt-[13px] shrink-0">
      <Group label="长度" className="w-[110px] h-[79px]">
        <div className="pl-[3px] pt-[3px] text-[9px] leading-[12px]">类型 (T):</div>
        <Field text="小数" className="ml-[3px] w-[100px]" />
        <div className="pl-[3px] text-[9px] leading-[12px]">精度 (P):</div>
        <Field text="0" className="ml-[3px] w-[100px]" />
      </Group>
      <Group label="角度" className="w-[109px] h-[79px]">
        <div className="pl-[3px] pt-[3px] text-[9px] leading-[12px]">类型 (Y):</div>
        <Field text="十进制度数" className="ml-[3px] w-[100px]" />
        <div className="pl-[3px] text-[9px] leading-[12px]">精度 (N):</div>
        <Field text="0" className="ml-[3px] w-[100px]" />
        <div className="flex items-center pl-[4px] pt-[7px] text-[9px] leading-[10px]">
          <div className="w-[9px] h-[9px] border border-[#6f86a8] bg-[#f4f4ec] mr-[2px]" />顺时针 (C)
        </div>
      </Group>
    </div>
    <div className="pl-[5px] pt-[10px] shrink-0">
      <Group label="插入比例" className="w-[230px] h-[38px]">
        <div className="pl-[3px] pt-[4px] text-[9px] leading-[11px]">用于缩放插入内容的单位:</div>
        <Field text="无单位" className="ml-[3px] w-[100px]" />
      </Group>
    </div>
    <div className="pl-[5px] pt-[5px] shrink-0">
      <Group className="w-[230px] h-[32px]" />
    </div>
    <div className="flex pl-[5px] pt-[5px] text-[9px] shrink-0">
      <div className="w-[60px] h-[14px] border-2 border-[#a9bfe6] rounded-[2px]" />
      <div className="w-[45px]" />
      <div className="w-[71px] h-[14px] bg-[#f4f3ec] border border-[#6f7f95] rounded-[2px] text-center leading-[12px]">方向 (D)...</div>
      <div className="w-[7px]" />
      <div className="w-[47px] h-[14px] bg-[#f4f3ec] border border-[#6f7f95] rounded-[2px] text-center leading-[12px]">帮助 (H)</div>
    </div>
    <div className="absolute left-[9px] top-[149px] w-[100px] h-[178px] bg-white border border-black text-[9px] leading-[8.4px] text-[#333]">
      {units.map((u, i) => (
        <div key={u} className={`h-[8.4px] pl-[1px] whitespace-nowrap ${i === 0 ? "bg-[#316ac5] text-white" : ""}`}>{u}</div>
      ))}
    </div>
  </div>
);

const Watermark = () => (
  <>
    <div className="absolute left-[841px] top-[493px] w-[12px] h-[12px] rounded-full bg-[#c4c4c4]" />
    <div className="absolute left-[859px] top-[493px] w-[12px] h-[12px] rounded-full bg-[#c4c4c4]" />
    <div className="absolute left-[836px] top-[533px] w-[120px] h-[53px] rounded-[14px] bg-white border border-black" />
    <div className="absolute left-[943px] top-[542px] w-[8px] h-[10px] bg-[#e4e4e4] border border-[#888] text-[10px] leading-[8px] text-black text-center font-bold">×</div>
    <svg width="20" height="16" viewBox="0 0 20 16" className="absolute left-[910px] top-[584px]"><path d="M4 0L18 14V0" fill="#fff" stroke="#000"/><path d="M5 0H17" stroke="#fff" strokeWidth="2"/></svg>
    <div className="absolute left-[765px] top-[500px] w-[180px] h-[85px] bg-[#1f2f53] flex items-center pl-[15px]">
      <svg width="34" height="36" viewBox="0 0 34 36" fill="none" className="shrink-0">
        <path d="M7 2C3.5 2 1.5 4.5 1.5 8V27C1.5 31.5 4 34.5 8.5 34.5" stroke="#b9bdc6" strokeWidth="2.6"/>
        <path d="M9 5C9 2.5 11.5 1 14 2.5L30.5 14.5C33 16.5 33 19.5 30.5 21.5L14 33.5C11.5 35 9 33.5 9 31" stroke="#b9bdc6" strokeWidth="2.6"/>
        <path d="M14 13L20 17.5L14 22Z" fill="#b9bdc6"/><rect x="22" y="13" width="1.8" height="9" fill="#b9bdc6"/>
      </svg>
      <div className="ml-[14px] flex flex-col items-start">
        <div className="text-[24px] leading-[28px] tracking-[3px] font-medium text-[#d5d8de] whitespace-nowrap" style={{ fontFamily: CJK }}>溜溜自学</div>
        <div className="text-[10px] leading-[12px] tracking-[1.1px] text-[#a9aebb] whitespace-nowrap" style={{ fontFamily: 'Inter, sans-serif' }}>ZIXUE.3D66.COM</div>
      </div>
    </div>
  </>
);

export default function App() {
  return (
    <div className="relative w-[1000px] h-[600px] overflow-hidden bg-[#ece9d8] flex flex-col blur-[0.5px]">
      <TitleBar />
      <MenuBar />
      <Row1 />
      <Row2 />
      <div className="flex h-[519px] shrink-0">
        <div className="w-[952px] shrink-0 flex flex-col">
          <div className="flex h-[471px] shrink-0">
            <LeftBars />
            <div className="flex flex-col flex-1 min-w-0">
              <Tabs />
              <Canvas />
              <LayoutTabs />
            </div>
          </div>
          <Command />
        </div>
        <RightPanel />
      </div>
      <StatusBar />
      <Dialog />
      <Watermark />
    </div>
  );
}
